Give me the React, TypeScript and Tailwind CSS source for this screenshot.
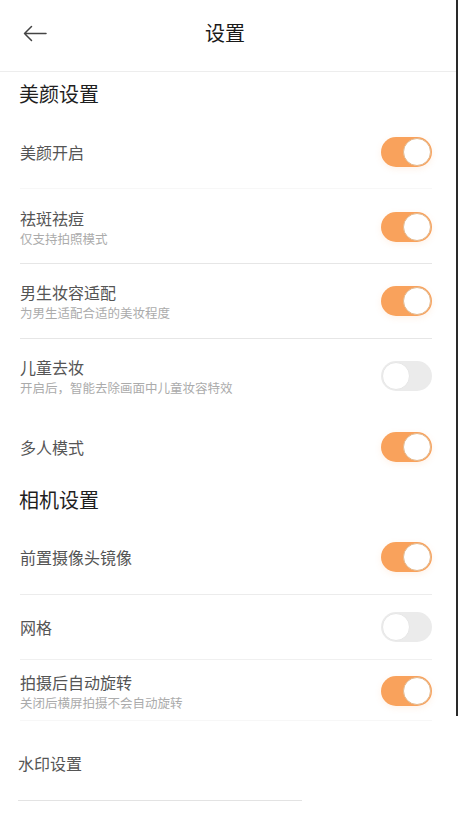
import React from 'react';

type Item = {
  title: string;
  sub?: string;
  on?: boolean;
  h: string;
  line: string;
};

// Toggle switch drawn with plain divs
const Toggle = ({ on }: { on: boolean }) =>
  on ? (
    <div className="flex h-[30px] w-[51px] items-center justify-end rounded-full bg-[#f9a25c] pr-[1px] shadow-[0_2px_6px_rgba(249,162,92,0.15)]">
      <div className="h-[28px] w-[28px] rounded-full border border-[#e2b98f] bg-white" />
    </div>
  ) : (
    <div className="flex h-[30px] w-[51px] items-center justify-start rounded-full bg-[#ebebeb] pl-[1px]">
      <div className="h-[28px] w-[28px] rounded-full border border-[#e6e6e6] bg-white" />
    </div>
  );

const Row = ({ item }: { item: Item }) => (
  <div className={`ml-[20px] mr-[24px] flex items-center justify-between border-b ${item.h} ${item.line}`}>
    <div className="flex flex-col">
      <span className="text-[16px] leading-[22px] text-[#555]">{item.title}</span>
      {item.sub && <span className="text-[12.5px] leading-[19px] text-[#ababab]">{item.sub}</span>}
    </div>
    {item.on !== undefined && <Toggle on={item.on} />}
  </div>
);

const beauty: Item[] = [
  { title: '美颜开启', on: true, h: 'h-[74px]', line: 'border-[#f7f7f7]' },
  { title: '祛斑祛痘', sub: '仅支持拍照模式', on: true, h: 'h-[75px] pt-[2px]', line: 'border-[#e6e6e6]' },
  { title: '男生妆容适配', sub: '为男生适配合适的美妆程度', on: true, h: 'h-[75px]', line: 'border-[#e6e6e6]' },
  { title: '儿童去妆', sub: '开启后，智能去除画面中儿童妆容特效', on: false, h: 'h-[75px]', line: 'border-transparent' },
  { title: '多人模式', on: true, h: 'h-[66px]', line: 'border-transparent' },
];

const camera: Item[] = [
  { title: '前置摄像头镜像', on: true, h: 'h-[75px]', line: 'border-[#ececec]' },
  { title: '网格', on: false, h: 'h-[65px]', line: 'border-[#f0f0f0]' },
  { title: '拍摄后自动旋转', sub: '关闭后横屏拍摄不会自动旋转', on: true, h: 'h-[61px] pt-[2px]', line: 'border-[#f7f7f7]' },
];

export default function App() {
  return (
    <div
      className="h-[820px] w-[458px] overflow-hidden bg-white"
      style={{ fontFamily: '"Noto Sans CJK SC", "Noto Sans", sans-serif' }}
    >
      <div className="flex">
        <div className="w-[456px]">
          {/* Header */}
          <div className="relative flex h-[72px] items-center justify-center border-b border-[#ededed] pb-[5px] pr-[6px]">
            <svg className="absolute left-[22px] top-[24px]" width="26" height="20" viewBox="0 0 26 20" fill="none">
              <path d="M24 9.5H2.5M9.5 2.5L2.5 9.5L9.5 16.5" stroke="#444" strokeWidth="1.5" strokeLinecap="round" strokeLinejoin="round" />
            </svg>
            <span className="text-[20px] text-[#1a1a1a]">设置</span>
          </div>

          {/* Beauty settings */}
          <div className="flex h-[43px] items-center px-[19px] text-[20px] text-[#1f1f1f]">美颜设置</div>
          {beauty.map((item) => (
            <Row key={item.title} item={item} />
          ))}

          {/* Camera settings */}
          <div className="flex h-[40px] items-center px-[19px] text-[20px] text-[#1f1f1f]">相机设置</div>
          {camera.map((item) => (
            <Row key={item.title} item={item} />
          ))}

          {/* Watermark */}
          <div className="mx-[18px] flex h-[79px] items-center pt-[4px]">
            <span className="text-[16px] text-[#555]">水印设置</span>
          </div>
          <div className="mx-[18px] w-[284px] border-b border-[#e3e3e3]" />
        </div>
        {/* dark edge of the captured frame */}
        <div className="h-[716px] w-[2px] bg-[#2a2a2a]" />
      </div>
    </div>
  );
}
